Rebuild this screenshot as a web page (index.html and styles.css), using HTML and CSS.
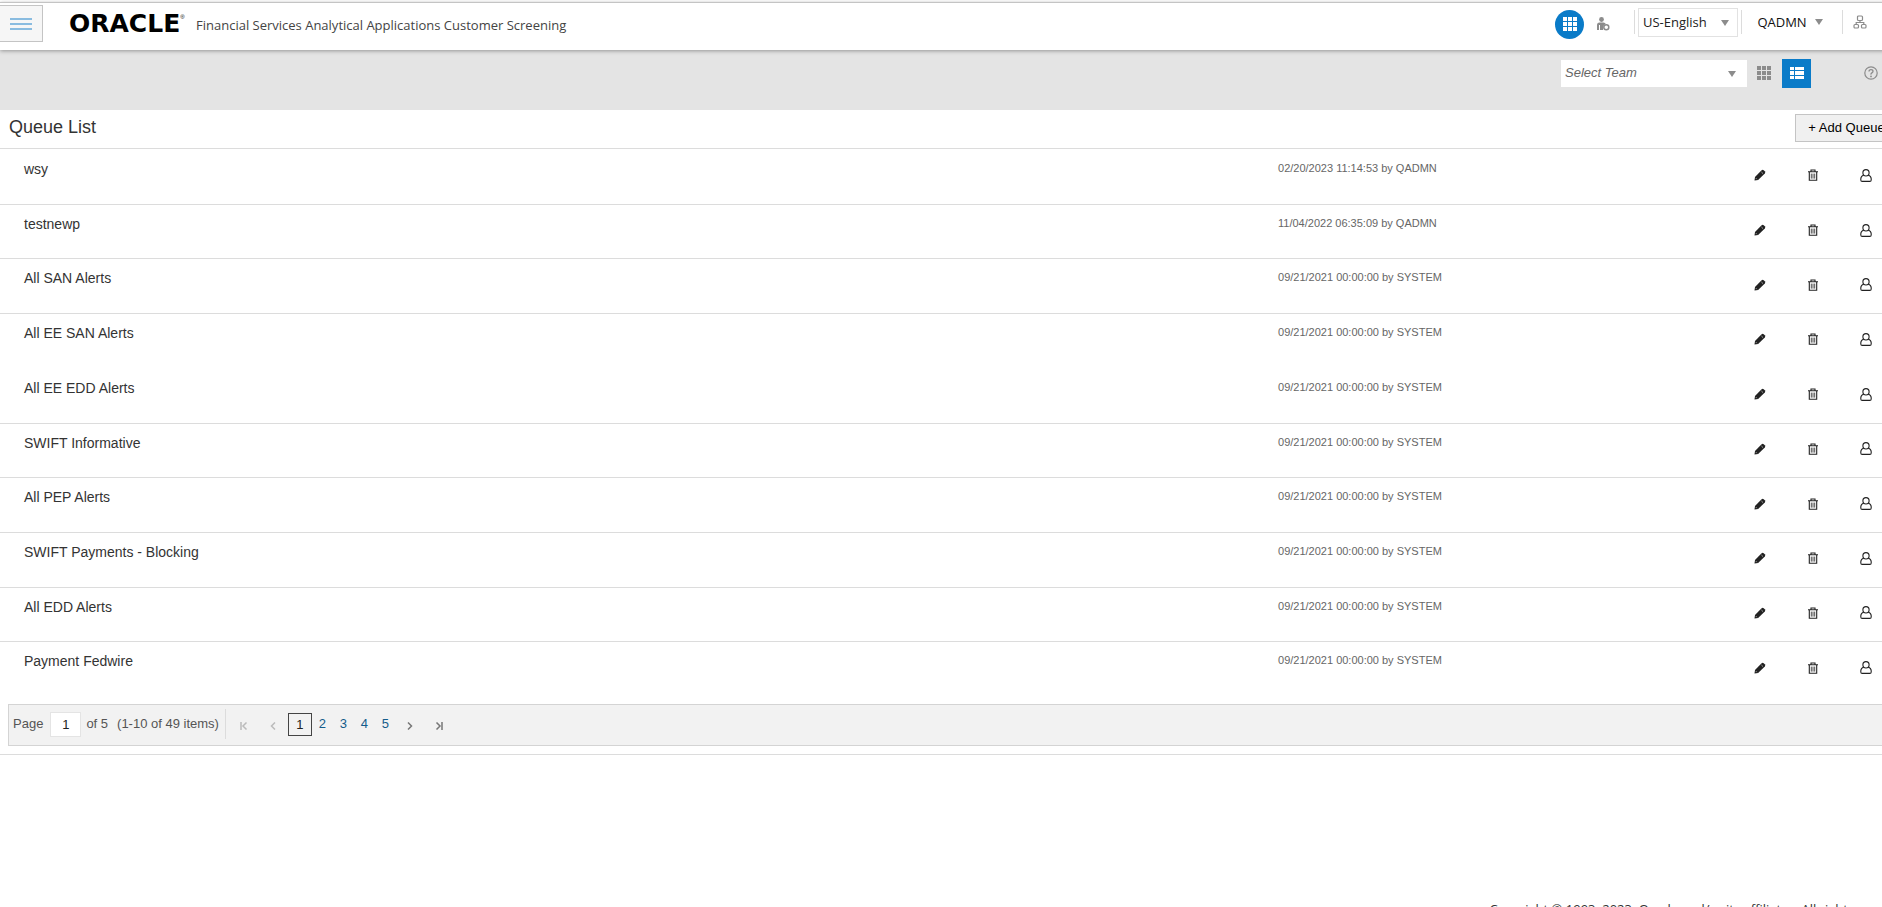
FILE: index.html
```html
<!DOCTYPE html>
<html lang="en">
<head>
<meta charset="utf-8">
<title>Queue List</title>
<link rel="stylesheet" href="styles.css">
</head>
<body>
<svg class="sprite" aria-hidden="true">
  <symbol id="i-grid" viewBox="0 0 14 14"><path d="M0 0h4v4H0zM5 0h4v4H5zM10 0h4v4h-4zM0 5h4v4H0zM5 5h4v4H5zM10 5h4v4h-4zM0 10h4v4H0zM5 10h4v4H5zM10 10h4v4h-4z" fill="currentColor"/></symbol>
  <symbol id="i-list" viewBox="0 0 14 14"><path d="M0 1h4v3H0zM5 1h9v3H5zM0 5h4v4H0zM5 5h9v4H5zM0 10h4v3H0zM5 10h9v3H5z" fill="currentColor"/></symbol>
  <symbol id="i-caret" viewBox="0 0 8 6"><path d="M0 0h8L4 6z" fill="currentColor"/></symbol>
  <symbol id="i-admin" viewBox="0 0 14 14"><circle cx="5.500" cy="2.500" r="2.400" fill="currentColor"/><path d="M1 13V8q0-2.500 2.500-2.500h4Q9.300 5.500 9.800 7Q6.500 8 7 13z" fill="currentColor"/><path d="M3.500 8v5" stroke="#fff"/><circle cx="10.300" cy="10.300" r="2.500" fill="none" stroke="currentColor" stroke-width="1.500"/></symbol>
  <symbol id="i-org" viewBox="0 0 14 14"><g fill="none" stroke="currentColor" stroke-width="1.200"><rect x="4.500" y="1" width="5" height="4.500" rx="1"/><rect x="1" y="9.500" width="4.500" height="3.500" rx="1"/><rect x="8.500" y="9.500" width="4.500" height="3.500" rx="1"/><path d="M7 5.500v2M3.200 9.500v-2h7.600v2"/></g></symbol>
  <symbol id="i-help" viewBox="0 0 14 14"><circle cx="7" cy="7" r="6.200" fill="none" stroke="currentColor" stroke-width="1.200"/><path d="M5 5.600q0-2 2-2t2 1.700q0 1-1.100 1.600T7 8.600" fill="none" stroke="currentColor" stroke-width="1.300"/><circle cx="7" cy="10.400" r=".9" fill="currentColor"/></symbol>
  <symbol id="i-pencil" viewBox="0 0 12 12"><path d="M.5 11.500L1 8 7.600 1.200q1.100-.9 2.100 0l1.100 1.100q.9 1.100 0 2.100L4.100 11z" fill="currentColor"/><path d="M1.900 9.200l1 1M7.400 3l1.600 1.600" stroke="#fff" stroke-width=".6"/></symbol>
  <symbol id="i-trash" viewBox="0 0 12 12"><path d="M1 2.700h10M4 2.500V1h4v1.500M2.300 2.900v8.400h7.400V2.900" fill="none" stroke="currentColor" stroke-width="1.100"/><path d="M4.300 4.600v5M6 4.600v5M7.700 4.600v5" stroke="currentColor" stroke-width=".8"/></symbol>
  <symbol id="i-user" viewBox="0 0 12 13"><path d="M3.800 6.200Q.8 7 .8 9.800v1.200q0 1.400 1.400 1.400h7.600q1.400 0 1.400-1.400V9.800Q11.200 7 8.200 6.200" fill="none" stroke="currentColor" stroke-width="1.100"/><ellipse cx="6" cy="3.800" rx="3.100" ry="3.200" fill="none" stroke="currentColor" stroke-width="1.100"/></symbol>
</svg>
<div class="app">
  <header class="topbar">
    <button class="menu" type="button" aria-label="Menu"><svg width="22" height="14" viewBox="0 0 22 14"><path d="M0 2h22M0 7h22M0 12h22" stroke="#8abce0" stroke-width="2"/></svg></button>
    <div class="brand"><span class="logo">ORACLE<sup>®</sup></span></div>
    <h1 class="product">Financial Services Analytical Applications Customer Screening</h1>
    <div class="tools">
      <button class="round" type="button" aria-label="Applications"><svg width="14" height="14"><use href="#i-grid"/></svg></button>
      <button class="plain admin" type="button" aria-label="Administration"><svg width="14" height="14"><use href="#i-admin"/></svg></button>
      <div class="pick language">
        <select aria-label="Language"><option>US-English</option></select>
        <svg class="caret" width="8" height="6"><use href="#i-caret"/></svg>
      </div>
      <button class="plain account" type="button">QADMN<svg width="8" height="6"><use href="#i-caret"/></svg></button>
      <button class="plain org" type="button" aria-label="Organization"><svg width="14" height="14"><use href="#i-org"/></svg></button>
    </div>
  </header>
  <div class="filterbar">
    <div class="pick team">
      <select aria-label="Team"><option>Select Team</option></select>
      <svg class="caret" width="8" height="6"><use href="#i-caret"/></svg>
    </div>
    <button class="view" type="button" aria-label="Grid view"><svg width="14" height="14"><use href="#i-grid"/></svg></button>
    <button class="view on" type="button" aria-label="List view"><svg width="14" height="14"><use href="#i-list"/></svg></button>
    <button class="plain help" type="button" aria-label="Help"><svg width="14" height="14"><use href="#i-help"/></svg></button>
  </div>
  <main class="panel">
    <div class="panel-head"><h2>Queue List</h2><button class="add" type="button">+ Add Queue</button></div>
    <ul class="queues" id="queues"></ul>
    <nav class="pager" aria-label="Pages">
      <label for="page">Page</label><input id="page" type="text" value="1">
      <span class="of">of 5</span><span class="count">(1-10 of 49 items)</span>
      <div class="pages">
        <button class="step off" type="button" aria-label="First page"><svg width="8" height="8" viewBox="0 0 8 8"><path d="M1 0v8M6.500 .5L3 4l3.500 3.500"/></svg></button>
        <button class="step off" type="button" aria-label="Previous page"><svg width="8" height="8" viewBox="0 0 8 8"><path d="M6 .5L2.500 4L6 7.500"/></svg></button>
        <span class="current">1</span>
        <a href="#2">2</a><a href="#3">3</a><a href="#4">4</a><a href="#5">5</a>
        <button class="step" type="button" aria-label="Next page"><svg width="8" height="8" viewBox="0 0 8 8"><path d="M2 .5L5.500 4L2 7.500"/></svg></button>
        <button class="step" type="button" aria-label="Last page"><svg width="8" height="8" viewBox="0 0 8 8"><path d="M7 0v8M1.500 .5L5 4L1.500 7.500"/></svg></button>
      </div>
    </nav>
  </main>
  <footer class="legal">Copyright © 1993, 2023, Oracle and/or its affiliates. All rights reserved.</footer>
</div>
<script src="queues.js"></script>
</body>
</html>
```
FILE: styles.css
```css
* { box-sizing: border-box; }
body {
  margin: 0;
  height: 100vh;
  overflow: hidden;
  background: #fff;
  color: #333;
  font: 14px/18px "Liberation Sans", Arial, sans-serif;
}
button, input, select { font: inherit; color: inherit; margin: 0; }
button { padding: 0; border: 0; background: none; display: flex; align-items: center; justify-content: center; }
h1, h2, ul { margin: 0; padding: 0; font-weight: normal; }
svg { display: block; flex: none; }
.sprite { position: absolute; width: 0; height: 0; }

/* The layout is slightly wider than the window */
.app { width: calc(100% + 24px); height: 100vh; display: flex; flex-direction: column; }

.topbar {
  position: relative;
  flex: none;
  display: flex;
  height: 48px;
  margin-top: 2px;
  padding: 2px 29px 8px 0;
  border-top: 1px solid #c4c4c4;
  background: #fff;
  box-shadow: 0 1px 4px rgba(0, 0, 0, .35);
  font-family: "Open Sans", "Noto Sans", sans-serif;
}
.menu { width: 43px; height: 37px; border: 1px solid #c4c4c4; border-left: 0; background: #f6f6f6; }
.brand { width: 153px; padding-left: 26px; }
.logo { font: bold 25px/37px "DejaVu Sans", sans-serif; color: #000; display: flex; }
.logo sup { font: 6px/8px "Liberation Sans", sans-serif; padding-top: 8px; }
.product { font-size: 13px; line-height: 40px; white-space: nowrap; color: #444; }
.tools { display: flex; align-items: center; margin-left: auto; height: 38px; }
.plain { color: #8c8c8c; }
.round { width: 29px; height: 29px; border-radius: 50%; background: #0a7bc8; color: #fff; }
.admin { width: 51px; height: 24px; margin-bottom: 4px; padding: 4px 12px 0 0; border-right: 1px solid #dcdcdc; }
.pick { position: relative; }
.pick select { appearance: none; width: 100%; height: 100%; border: 0; padding: 0 4px; background: #fff; border-radius: 0; }
.caret { position: absolute; right: 9px; top: 50%; margin-top: -2px; color: #8c8c8c; pointer-events: none; }
.language { width: 100px; height: 29px; margin: 0 3px 4px 3px; }
.language select { border: 1px solid #e2e2e2; font-size: 13px; color: #222; }
.account { width: 102px; height: 24px; margin-bottom: 4px; gap: 8px; padding-right: 4px; border: solid #dcdcdc; border-width: 0 1px; font-size: 13px; color: #111; }
.account svg { color: #8c8c8c; }
.org { width: 34px; height: 24px; margin-bottom: 4px; }

.filterbar { flex: none; display: flex; align-items: center; justify-content: flex-end; height: 60px; padding: 0 28px 14px 0; background: #e4e4e4; }
.team { width: 186px; height: 27px; margin-right: 2px; }
.team select { font-style: italic; font-size: 13px; color: #666; }
.team .caret { right: 11px; }
.view { width: 29px; height: 29px; color: #8c8c8c; }
.view.on { margin-left: 4px; background: #0a7bc8; color: #fff; }
.help { width: 14px; height: 14px; margin-left: 53px; }

.panel { flex: none; border-bottom: 1px solid #dcdcdc; }
.panel-head { display: flex; align-items: center; justify-content: space-between; height: 39px; padding: 0 8px 4px 9px; border-bottom: 1px solid #dcdcdc; }
.panel-head h2 { font-size: 18px; }
.add { width: 103px; height: 28px; margin-top: 2px; border: 1px solid #c4c4c4; background: #f0f0f0; color: #000; font-size: 13px; white-space: nowrap; }

.queues { list-style: none; display: grid; grid-auto-rows: 1fr; height: 548px; padding-top: 1px; }
.queue { display: grid; grid-template-columns: 67% 1fr auto; border-bottom: 1px solid #dcdcdc; }
.queue.joined, .queue:last-child { border-color: transparent; }
.name { padding: 10px 0 0 24px; }
.stamp { padding: 9px 0 0 1px; font-size: 11px; color: #666; white-space: nowrap; }
.actions { display: flex; align-items: center; padding: 0 14px 3px 0; color: #222; }
.actions button { width: 53px; height: 48px; }

.pager { display: flex; align-items: center; height: 42px; margin: 7px 0 8px 8px; padding: 0 4px 2px; border: 1px solid #d4d4d4; background: #f2f2f2; color: #555; font-size: 13px; }
.pager input { width: 31px; height: 25px; margin: 0 5px 0 7px; padding: 0; border: 1px solid #e4e4e4; background: #fff; color: #222; text-align: center; }
.count { margin-left: 9px; }
.pages { display: flex; align-items: center; height: 30px; margin-left: 6px; border-left: 1px solid #dcdcdc; padding-left: 4px; }
.pages a { width: 21px; text-align: center; color: #145c8b; text-decoration: none; }
.current { width: 24px; height: 23px; border: 1px solid #444; color: #222; line-height: 21px; text-align: center; }
.step { width: 29px; height: 24px; padding-top: 4px; }
.step path { fill: none; stroke: #777; stroke-width: 1.5; }
.step.off path { stroke: #bbb; }

/* Sits across the lower edge of the window */
.legal { margin: auto -8px -11px auto; font: 13px/18px "Open Sans", "Noto Sans", sans-serif; white-space: nowrap; }
```
FILE: queues.js
```js
const queues = [
  ["wsy", "02/20/2023 11:14:53 by QADMN"],
  ["testnewp", "11/04/2022 06:35:09 by QADMN"],
  ["All SAN Alerts", "09/21/2021 00:00:00 by SYSTEM"],
  ["All EE SAN Alerts", "09/21/2021 00:00:00 by SYSTEM", "joined"],
  ["All EE EDD Alerts", "09/21/2021 00:00:00 by SYSTEM"],
  ["SWIFT Informative", "09/21/2021 00:00:00 by SYSTEM"],
  ["All PEP Alerts", "09/21/2021 00:00:00 by SYSTEM"],
  ["SWIFT Payments - Blocking", "09/21/2021 00:00:00 by SYSTEM"],
  ["All EDD Alerts", "09/21/2021 00:00:00 by SYSTEM"],
  ["Payment Fedwire", "09/21/2021 00:00:00 by SYSTEM"]
];
document.getElementById("queues").innerHTML = queues.map(([name, stamp, mod = ""]) => `
  <li class="queue ${mod}">
    <span class="name">${name}</span>
    <span class="stamp">${stamp}</span>
    <span class="actions">
      <button type="button" aria-label="Edit ${name}"><svg width="12" height="12"><use href="#i-pencil"/></svg></button>
      <button type="button" aria-label="Delete ${name}"><svg width="12" height="12"><use href="#i-trash"/></svg></button>
      <button type="button" aria-label="Assign ${name}"><svg width="12" height="13"><use href="#i-user"/></svg></button>
    </span>
  </li>`).join("");
```
